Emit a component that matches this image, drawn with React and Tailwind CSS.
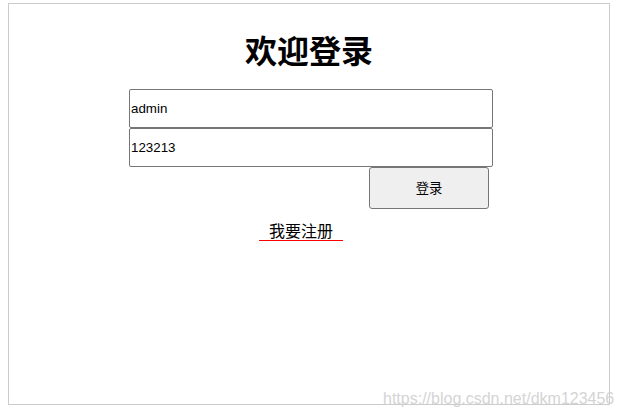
import React from "react";

export default function App() {
  return (
    <div className="relative w-[623px] h-[415px] bg-white overflow-hidden font-['Liberation_Sans','Noto_Sans_CJK_SC',sans-serif]">
      <div className="ml-[8px] mt-[3px] w-[602px] h-[402px] border border-[#cccccc] flex flex-col">
        <h1 className="mt-[25px] h-[40px] leading-[40px] text-[32px] font-bold text-black text-center font-['Noto_Sans_CJK_SC',sans-serif]">
          欢迎登录
        </h1>
        <div className="mt-[20px] ml-[120px] w-[364px] flex flex-col">
          <input
            readOnly
            value="admin"
            className="h-[39px] w-full border border-[#767676] rounded-[2px] px-[1px] text-[13.33px] text-black outline-none font-['Liberation_Sans',sans-serif]"
          />
          <input
            readOnly
            value="123213"
            className="h-[39px] w-full border border-[#767676] rounded-[2px] px-[1px] text-[13.33px] text-black outline-none font-['Liberation_Sans',sans-serif]"
          />
          <div className="flex">
            <button className="ml-[240px] w-[120px] h-[42px] bg-[#efefef] border border-[#767676] rounded-[3px] text-[13.33px] text-black font-['Noto_Sans_CJK_SC',sans-serif]">
              登录
            </button>
          </div>
        </div>
        <div className="mt-[11px] ml-[250px] flex">
          <span className="px-[10px] h-[21px] leading-[20px] text-[16px] text-black border-b border-solid border-b-[#ff0000] font-['Noto_Sans_CJK_SC',sans-serif]">
            我要注册
          </span>
        </div>
      </div>
      <div className="absolute left-[383px] top-[390px] text-[16px] leading-[18px] text-[#d4d4d4] whitespace-nowrap font-['Liberation_Sans',sans-serif]">
        https://blog.csdn.net/dkm123456
      </div>
    </div>
  );
}
